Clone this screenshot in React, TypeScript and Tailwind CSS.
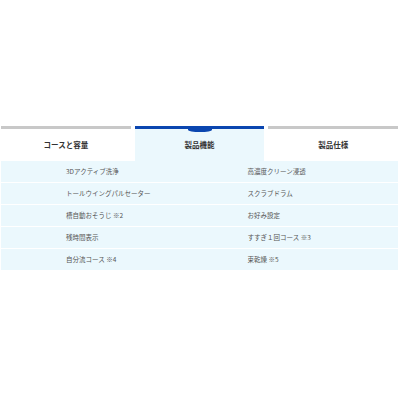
import React, { useState } from 'react';

const tabs = ['コースと容量', '製品機能', '製品仕様'];

const features: [string, string][] = [
  ['3Dアクティブ洗浄', '高濃度クリーン浸透'],
  ['トールウイングパルセーター', 'スクラブドラム'],
  ['槽自動おそうじ ※2', 'お好み設定'],
  ['残時間表示', 'すすぎ１回コース ※3'],
  ['自分流コース ※4', '束乾燥 ※5'],
];

export default function App() {
  const [active, setActive] = useState(1);

  return (
    <div
      className="w-[400px] h-[400px] bg-white pt-[126px] px-[1px] text-[#333]"
      style={{ fontFamily: '"Noto Sans CJK JP", "Noto Sans", sans-serif' }}
    >
      {/* タブ */}
      <div className="flex gap-[4px] w-[397px]">
        {tabs.map((t, i) => (
          <button
            key={t}
            onClick={() => setActive(i)}
            className={`relative flex-1 h-[35px] flex items-center justify-center text-[7.5px] font-bold border-t-[3px] ${
              active === i ? 'border-[#0a46b0] bg-[#ebf8fd]' : 'border-[#c8c8c8] bg-white'
            }`}
          >
            {active === i && (
              <span className="absolute left-1/2 -translate-x-1/2 top-[-1px] w-[24px] h-[4px] rounded-b-[50%] bg-[#0a46b0]" />
            )}
            {t}
          </button>
        ))}
      </div>

      {/* 機能一覧 */}
      <div className="w-[397px]">
        {features.map(([a, b]) => (
          <div key={a} className="grid grid-cols-2 h-[22px] bg-[#ebf8fd] border-b border-white text-[6.5px] text-[#555]">
            <div className="flex items-center pl-[65px]">{a}</div>
            <div className="flex items-center pl-[48px]">{b}</div>
          </div>
        ))}
      </div>
    </div>
  );
}
